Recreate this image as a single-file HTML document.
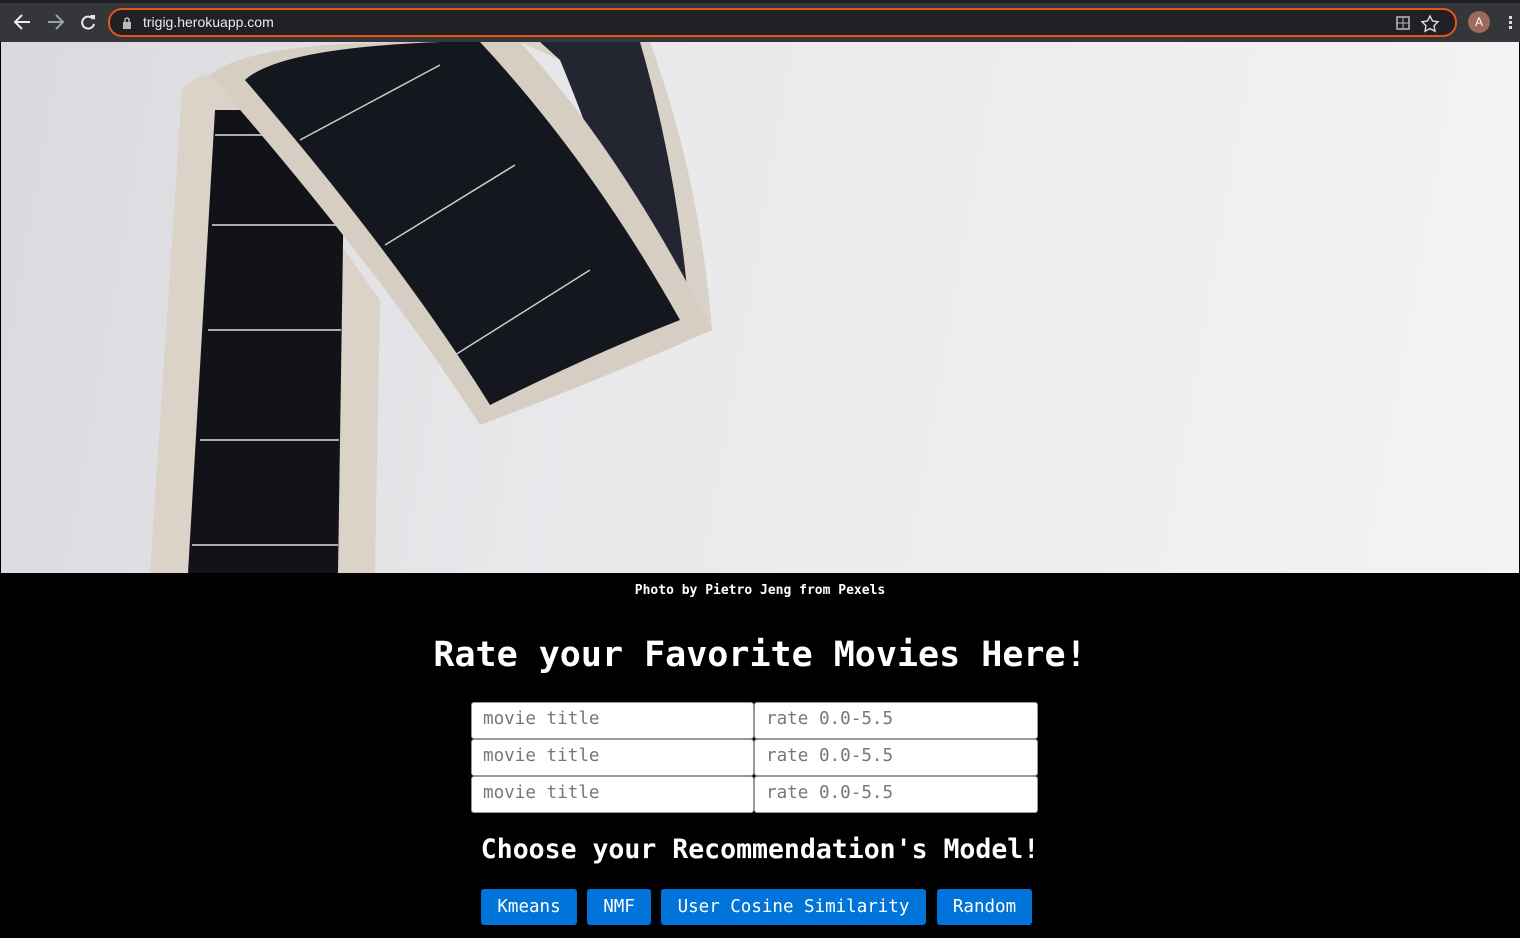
<!DOCTYPE html>
<html><head><meta charset="utf-8"><style>
*{margin:0;padding:0;box-sizing:border-box}
body{width:1520px;height:938px;background:#000;overflow:hidden;font-family:"DejaVu Sans Mono","Liberation Mono",monospace;position:relative}
.bar{position:absolute;left:0;top:0;width:1520px;height:42px;background:#35363a;border-top:3px solid #202124}
.addr{position:absolute;left:108px;top:5px;width:1349px;height:29px;border:2px solid #e8541c;border-radius:14px;background:#202124}
.addr span{position:absolute;left:33px;top:4px;color:#e8eaed;font:14px "Liberation Sans",sans-serif}
.hero{position:absolute;left:1px;top:42px;width:1518px;height:531px;background:linear-gradient(100deg,#d9d9de 0%,#e9e9ec 40%,#f3f3f5 100%)}
.cap{position:absolute;top:583px;left:0;width:1520px;text-align:center;color:#fff;font-weight:bold;font-size:13px}
h1{position:absolute;top:635px;left:0;width:1520px;text-align:center;color:#fff;font-size:35px;font-weight:bold}
h2{position:absolute;top:834px;left:0;width:1520px;text-align:center;color:#fff;font-size:26.5px;font-weight:bold}
.in{position:absolute;background:#fff;border:1px solid #999;border-radius:3px;height:37px;color:#777;font-size:17.6px;padding:6px 11px 4px}
.btn{position:absolute;top:889px;height:36px;background:#0074d9;border-radius:3px;color:#fff;font-size:17.5px;text-align:center;line-height:37px}
</style></head><body>
<div class="bar">
<svg width="110" height="40" style="position:absolute;left:0;top:0">
<path d="M30 19H16M22 12l-7 7 7 7" stroke="#e8eaed" stroke-width="2" fill="none"/>
<path d="M48 19h14M56 12l7 7-7 7" stroke="#9aa0a6" stroke-width="2" fill="none"/>
<path d="M93 16a6 6 0 1 0 1 5" stroke="#e8eaed" stroke-width="2" fill="none"/><path d="M90 12h5v5z" fill="#e8eaed"/>
</svg>
<div class="addr"><svg width="12" height="14" style="position:absolute;left:12px;top:6px"><rect x="1" y="6" width="8" height="7" fill="#bbb"/><path d="M3 6V4a2 2 0 0 1 4 0v2" stroke="#bbb" fill="none" stroke-width="1.5"/></svg><span>trigig.herokuapp.com</span>
<svg width="60" height="24" style="position:absolute;right:2px;top:1px"><rect x="4" y="6" width="12" height="12" fill="none" stroke="#bbb" stroke-width="1.5"/><path d="M10 6v12M4 12h12" stroke="#bbb"/><path d="M37 5l2.5 5 5.5.8-4 3.9 1 5.5-5-2.6-5 2.6 1-5.5-4-3.9 5.5-.8z" fill="none" stroke="#ddd" stroke-width="1.4"/></svg></div>
<div style="position:absolute;left:1468px;top:8px;width:22px;height:22px;border-radius:50%;background:#9c6b5e;color:#fff;font:12px 'Liberation Sans';text-align:center;line-height:22px">A</div>
<div style="position:absolute;left:1509px;top:13px;width:3px;height:3px;background:#ddd;box-shadow:0 5px #ddd,0 10px #ddd"></div>
</div>
<div class="hero">
<svg width="1518" height="531" viewBox="1 42 1518 531">
<path d="M520 42 L650 42 Q700 180 712 330 L662 330 Q620 180 560 60 Z" fill="#d9d2c8"/>
<path d="M540 42 L640 42 Q680 180 690 325 L650 330 Q610 180 560 60 Z" fill="#232631"/>
<path d="M182 90 Q200 70 220 75 L380 300 L375 573 L150 573 Z" fill="#dcd3c8"/>
<path d="M215 110 L345 110 L338 573 L188 573 Z" fill="#111318"/>
<g stroke="#aaa" stroke-width="2"><line x1="215" y1="135" x2="345" y2="135"/><line x1="212" y1="225" x2="343" y2="225"/><line x1="208" y1="330" x2="341" y2="330"/><line x1="200" y1="440" x2="339" y2="440"/><line x1="192" y1="545" x2="338" y2="545"/></g>
<path d="M210 75 Q250 40 440 42 L520 42 Q620 150 712 330 Q600 380 480 425 Q380 270 210 75 Z" fill="#d6cec3"/>
<path d="M245 80 Q280 48 440 42 L480 42 Q590 160 680 320 Q590 355 490 405 Q400 260 245 80 Z" fill="#15171e"/>
<g stroke="#ccc" stroke-width="1.5"><line x1="300" y1="140" x2="440" y2="65"/><line x1="385" y1="245" x2="515" y2="165"/><line x1="455" y1="355" x2="590" y2="270"/></g>
</svg>
</div>
<div class="cap">Photo by Pietro Jeng from Pexels</div>
<h1>Rate your Favorite Movies Here!</h1>
<div class="in" style="left:471px;top:702px;width:283px">movie title</div>
<div class="in" style="left:754px;top:702px;width:284px">rate 0.0-5.5</div>
<div class="in" style="left:471px;top:739px;width:283px">movie title</div>
<div class="in" style="left:754px;top:739px;width:284px">rate 0.0-5.5</div>
<div class="in" style="left:471px;top:776px;width:283px">movie title</div>
<div class="in" style="left:754px;top:776px;width:284px">rate 0.0-5.5</div>
<h2>Choose your Recommendation's Model!</h2>
<div class="btn" style="left:481px;width:96px">Kmeans</div>
<div class="btn" style="left:587px;width:64px">NMF</div>
<div class="btn" style="left:661px;width:265px">User Cosine Similarity</div>
<div class="btn" style="left:937px;width:95px">Random</div>
</body></html>
